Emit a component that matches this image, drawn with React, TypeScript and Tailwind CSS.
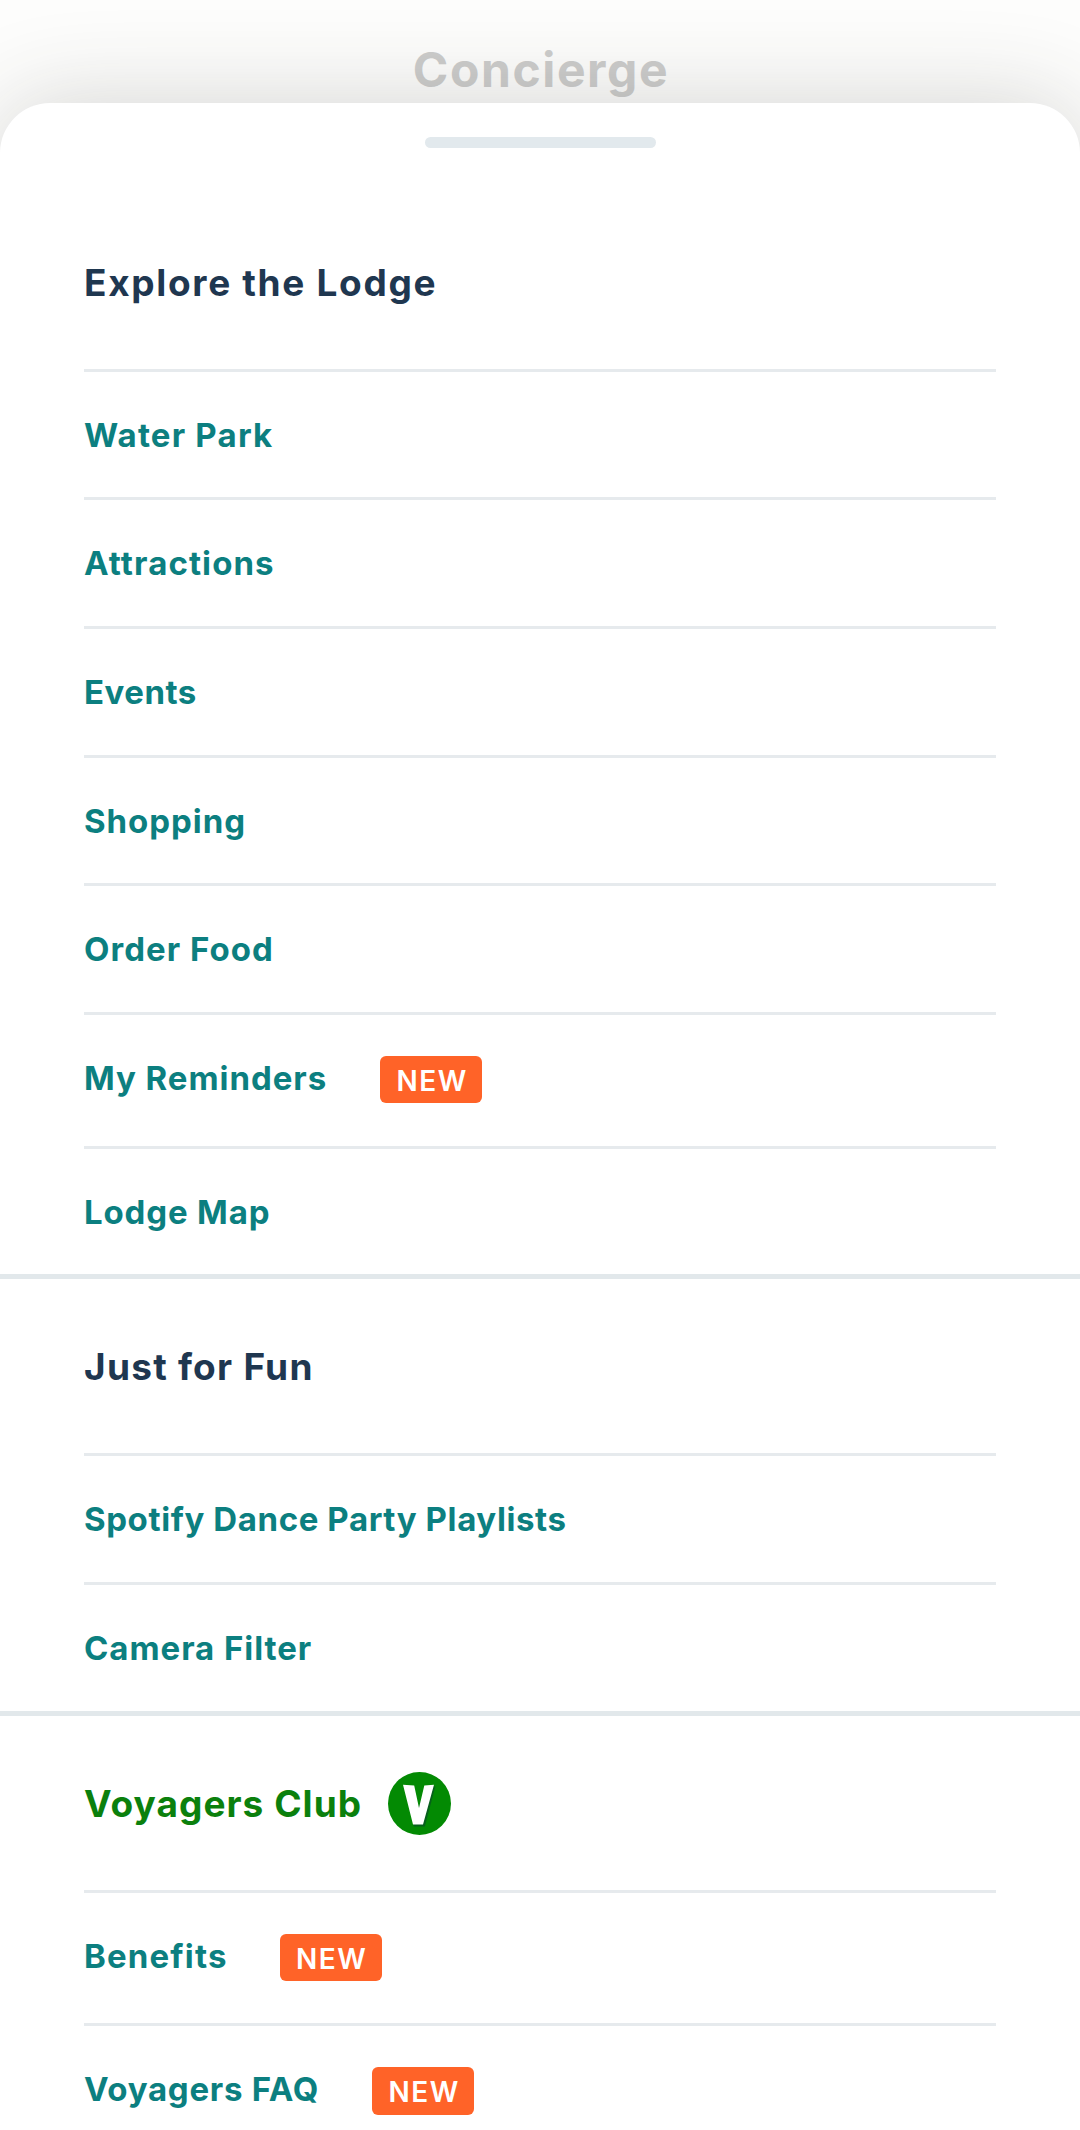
type Item = { label: string; spacing: string; badge?: string };
type Section = { title: string; spacing: string; color: string; logo?: boolean; items: Item[] };

const sections: Section[] = [
  {
    title: 'Explore the Lodge',
    spacing: 'tracking-[1.67px]',
    color: 'text-[#1f3750]',
    items: [
      { label: 'Water Park', spacing: 'tracking-[1.2px]' },
      { label: 'Attractions', spacing: 'tracking-[1.1px]' },
      { label: 'Events', spacing: 'tracking-[0.5px]' },
      { label: 'Shopping', spacing: 'tracking-[0.95px]' },
      { label: 'Order Food', spacing: 'tracking-[1.05px]' },
      { label: 'My Reminders', spacing: 'tracking-[0.95px]', badge: 'ml-[53px]' },
      { label: 'Lodge Map', spacing: 'tracking-[0.85px]' },
    ],
  },
  {
    title: 'Just for Fun',
    spacing: 'tracking-[1.25px]',
    color: 'text-[#1f3750]',
    items: [
      { label: 'Spotify Dance Party Playlists', spacing: 'tracking-[0.6px]' },
      { label: 'Camera Filter', spacing: 'tracking-[0.95px]' },
    ],
  },
  {
    title: 'Voyagers Club',
    spacing: 'tracking-[1.05px]',
    color: 'text-[#0b800d]',
    logo: true,
    items: [
      { label: 'Benefits', spacing: 'tracking-[1.15px]', badge: 'ml-[52px]' },
      { label: 'Voyagers FAQ', spacing: 'tracking-[0.72px]', badge: 'ml-[53px]' },
    ],
  },
];

function VoyagersLogo() {
  return (
    <svg viewBox="0 0 63 63" className="mt-[56px] ml-[25.5px] size-[63px]" aria-hidden="true">
      <circle cx="31.5" cy="31.5" r="31.5" fill="#038a03" />
      <path d="M38 14 L47.3 14.5 L36.8 54.5 L26 54.5 L25 52 Z" fill="#07601c" />
      <path d="M15 12.7 L26.2 13.5 L31 36 L36.3 13.5 L46 12.7 L35 52.5 L25 52.5 Z" fill="#fff" />
    </svg>
  );
}

function NewBadge({ margin }: { margin: string }) {
  return (
    <span
      className={`mt-[41px] flex h-[47.5px] w-[102px] justify-center rounded-[6px] bg-[#ff6328] pl-[2px] text-[28px] leading-[50px] font-semibold tracking-[1.5px] text-white ${margin}`}
    >
      NEW
    </span>
  );
}

function MenuItem({ item }: { item: Item }) {
  return (
    <li
      className={`flex items-start border-t-[3px] border-[#e6eaed] ${item.badge ? 'h-[133.6px]' : 'h-[128.7px]'}`}
    >
      <a className={`pt-[43px] text-[33px] leading-[40px] font-bold text-[#0c7f80] ${item.spacing}`}>{item.label}</a>
      {item.badge && <NewBadge margin={item.badge} />}
    </li>
  );
}

export default function App() {
  return (
    <div className="flex h-[2130px] w-[1080px] flex-col overflow-hidden bg-[#fdfdfc] font-['Inter',sans-serif]">
      <header className="flex h-[102.5px] shrink-0 justify-center pt-[41px] pl-[2px]">
        <h1 className="text-[48px] leading-[58px] font-bold tracking-[1.6px] text-[#cdcdcc]">Concierge</h1>
      </header>
      <main className="relative flex-1 rounded-t-[50px] bg-white shadow-[0_0_96px_rgba(50,50,45,0.2)]">
        <div className="flex h-[92px] justify-center pt-[34px]">
          <div className="h-[11px] w-[231px] rounded-full bg-[#e2e9ed]" />
        </div>
        {sections.map((section, i) => (
          <section key={section.title} className={`px-[84px] ${i > 0 ? 'border-t-[5px] border-[#e2e8eb]' : ''}`}>
            <div className="flex h-[174px] items-start">
              <h2 className={`pt-[66px] text-[37px] leading-[44px] font-bold ${section.spacing} ${section.color}`}>
                {section.title}
              </h2>
              {section.logo && <VoyagersLogo />}
            </div>
            <ul>
              {section.items.map((item) => (
                <MenuItem key={item.label} item={item} />
              ))}
            </ul>
          </section>
        ))}
      </main>
    </div>
  );
}
